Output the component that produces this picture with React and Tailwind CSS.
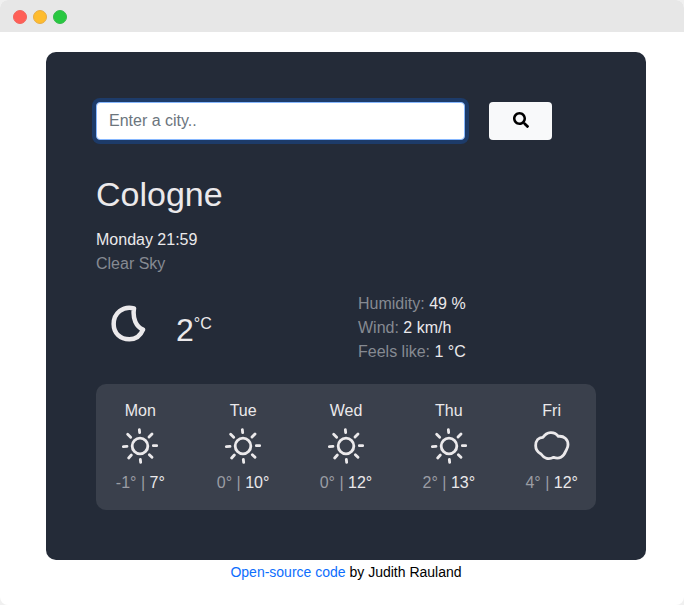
import { FaSearch } from "react-icons/fa";

const days = [
  { name: "Mon", icon: "sun", min: "-1°", max: "7°" },
  { name: "Tue", icon: "sun", min: "0°", max: "10°" },
  { name: "Wed", icon: "sun", min: "0°", max: "12°" },
  { name: "Thu", icon: "sun", min: "2°", max: "13°" },
  { name: "Fri", icon: "cloud", min: "4°", max: "12°" },
];

function Sun() {
  return (
    <svg width="40" height="40" viewBox="0 0 120 120" fill="none" stroke="#ebe9eb" strokeWidth="8.5" strokeLinecap="round">
      <circle cx="60" cy="60" r="23.5" />
      <path d="M58 11 59 20M61 100 62 109M10 62 21 61M100 59 110 59M23 25 32 34M96 24 87 33M26 96 34 87M88 86 96 94" />
    </svg>
  );
}

function Cloud() {
  return (
    <svg width="40" height="40" viewBox="0 0 120 120" fill="none" stroke="#ebe9eb" strokeWidth="8.5" strokeLinejoin="round" strokeLinecap="round">
      <path d="M33 34C44 16 67 15 79 31C96 29 108 40 108 56C108 65 104 69 101 76C95 93 81 100 65 94C50 102 36 97 27 84C15 77 11 68 11 59C11 45 19 34 33 34Z" />
    </svg>
  );
}

function Moon() {
  return (
    <svg width="40" height="40" viewBox="0 0 120 120" fill="none" stroke="#ebe9eb" strokeWidth="13.5" strokeLinejoin="round">
      <path d="M78 13C45 4 17 28 17 60C17 88 37 106 64 106C83 106 98 94 105 77C85 68 73 45 78 13Z" />
    </svg>
  );
}

export default function App() {
  return (
    <div className="h-[605px] w-[684px] overflow-hidden bg-[#f0f0f0] font-['Liberation_Sans',Arial,sans-serif] text-base leading-6 text-[#ebe9eb]">
      <div className="flex h-full flex-col overflow-hidden rounded-lg bg-white">
        <header className="flex h-8 shrink-0 items-center gap-1.5 bg-[#e7e7e7] pt-0.5 pl-[13px]">
          <span className="size-3.5 rounded-full border border-[#f0645d] bg-[#ff5f57]" />
          <span className="size-3.5 rounded-full border border-[#e6ac45] bg-[#febc2e]" />
          <span className="size-3.5 rounded-full border border-[#35b94b] bg-[#28c840]" />
        </header>
        <main className="mt-5 ml-[46px] h-[508px] w-[600px] shrink-0 rounded-[10px] bg-[#242b38] p-[50px]">
          <form className="flex gap-6">
            <input
              className="h-[38px] w-[369px] rounded border border-[#86b7fe] bg-white px-3 text-[#212529] shadow-[0_0_0_4px_#1d3b69] outline-none placeholder:text-[#6c757d]"
              placeholder="Enter a city.."
            />
            <button type="button" aria-label="Search" className="flex h-[38px] w-[63px] items-center justify-center rounded bg-[#f8f9fa] pb-0.5 text-black">
              <FaSearch size={16} />
            </button>
          </form>
          <h1 className="mt-[34px] text-[34px] leading-[41px]">Cologne</h1>
          <p className="mt-[13px]">Monday 21:59</p>
          <p className="text-[#868a92]">Clear Sky</p>
          <div className="mt-4 flex h-[72px]">
            <div className="flex w-[262px] pl-3">
              <div className="pt-3"><Moon /></div>
              <div className="flex pt-[14px] pl-7">
                <span className="text-[32px] leading-[48px]">2</span>
                <span className="text-base leading-[36px]">°C</span>
              </div>
            </div>
            <ul>
              <li><span className="text-[#868a92]">Humidity:</span> 49 %</li>
              <li><span className="text-[#868a92]">Wind:</span> 2 km/h</li>
              <li><span className="text-[#868a92]">Feels like:</span> 1 °C</li>
            </ul>
          </div>
          <div className="mt-5 flex h-[126px] justify-between rounded-[10px] bg-[#3a404c] pt-[15px]">
            {days.map((d) => (
              <div key={d.name} className="flex w-[88.6px] flex-col items-center">
                <div>{d.name}</div>
                <div className="mt-[3px] mb-[5px] h-10">{d.icon === "sun" ? <Sun /> : <Cloud />}</div>
                <div><span className="text-[#9a9da4]">{d.min} | </span>{d.max}</div>
              </div>
            ))}
          </div>
        </main>
        <footer className="ml-[46px] w-[600px] text-center text-sm leading-6 text-black">
          <span className="text-[#0d6efd]">Open-source code</span> by Judith Rauland
        </footer>
      </div>
    </div>
  );
}
